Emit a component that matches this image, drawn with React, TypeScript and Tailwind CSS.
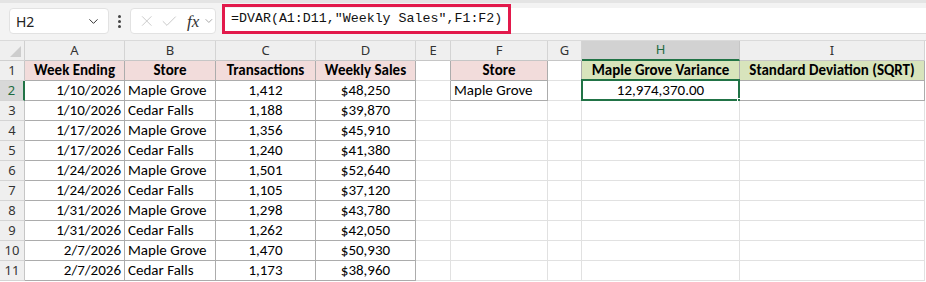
import { ChevronDown, X, Check } from "lucide-react";

const colLetters = ["A", "B", "C", "D", "E", "F", "G", "H", "I"];

const rows = [
  ["1/10/2026", "Maple Grove", "1,412", "$48,250"],
  ["1/10/2026", "Cedar Falls", "1,188", "$39,870"],
  ["1/17/2026", "Maple Grove", "1,356", "$45,910"],
  ["1/17/2026", "Cedar Falls", "1,240", "$41,380"],
  ["1/24/2026", "Maple Grove", "1,501", "$52,640"],
  ["1/24/2026", "Cedar Falls", "1,105", "$37,120"],
  ["1/31/2026", "Maple Grove", "1,298", "$43,780"],
  ["1/31/2026", "Cedar Falls", "1,262", "$42,050"],
  ["2/7/2026", "Maple Grove", "1,470", "$50,930"],
  ["2/7/2026", "Cedar Falls", "1,173", "$38,960"],
];

// cells with a drawn border: A1:D11, F1:F2, H1:I2
const bordered = (r: number, c: number) =>
  (r >= 1 && r <= 11 && c >= 0 && c <= 3) ||
  (r >= 1 && r <= 2 && c === 5) ||
  (r >= 1 && r <= 2 && (c === 7 || c === 8));

const cellText = (r: number, c: number): string => {
  if (r === 1) {
    return (
      ["Week Ending", "Store", "Transactions", "Weekly Sales", "", "Store", "", "Maple Grove Variance", "Standard Deviation (SQRT)"][c] || ""
    );
  }
  if (c <= 3) return rows[r - 2][c];
  if (r === 2 && c === 5) return "Maple Grove";
  if (r === 2 && c === 7) return "12,974,370.00";
  return "";
};

const Cell = ({ r, c }: { r: number; c: number }) => {
  const right = bordered(r, c) || bordered(r, c + 1) ? "border-r-[#acacac]" : "border-r-[#e1e1e1]";
  const bottom = bordered(r, c) || bordered(r + 1, c) ? "border-b-[#acacac]" : "border-b-[#e1e1e1]";
  let bg = "bg-white";
  if (r === 1 && (c <= 3 || c === 5)) bg = "bg-[#f2dcdb]";
  if (r === 1 && (c === 7 || c === 8)) bg = "bg-[#d8e4bc]";
  let align = "justify-center";
  if (r >= 2 && c === 0) align = "justify-end pr-[3px]";
  if (r >= 2 && (c === 1 || c === 5)) align = "justify-start pl-[3px]";
  const bold = r === 1 ? "font-bold" : "";
  const selected = r === 2 && c === 7;
  return (
    <div className={`relative flex items-center border-r border-b ${right} ${bottom} ${bg} ${align} ${bold} overflow-visible whitespace-nowrap`}>
      {cellText(r, c)}
      {selected && (
        <>
          <div className="absolute -top-[2px] -left-[1px] -right-[1px] -bottom-[1px] border-2 border-[#217346]" />
          <div className="absolute -right-[4px] -bottom-[4px] w-[6px] h-[6px] bg-[#217346] border border-white" />
        </>
      )}
    </div>
  );
};

const App = () => {
  return (
    <div className="w-[926px] h-[282px] overflow-hidden bg-white font-['Carlito','Lato',sans-serif] text-[15px] text-black">
      {/* formula toolbar */}
      <div className="h-[41px] bg-[#f3f3f3] border-t-[3px] border-[#e4e4e4] border-b border-b-[#dadada] flex items-start pt-[5px] pl-[9px]">
        <div className="w-[100px] h-[26px] bg-white rounded-[4px] border border-[#e2e2e2] flex items-center justify-between pl-[6px] pr-[7px] font-['Noto_Sans',sans-serif] text-[14px] text-[#222]">
          <span>H2</span>
          <ChevronDown size={15} strokeWidth={1.6} className="text-[#333]" />
        </div>
        <div className="w-[21px] h-[26px] flex flex-col items-center justify-center gap-[2px]">
          <span className="w-[3px] h-[3px] rounded-full bg-[#444]" />
          <span className="w-[3px] h-[3px] rounded-full bg-[#444]" />
          <span className="w-[3px] h-[3px] rounded-full bg-[#444]" />
        </div>
        <div className="w-[86px] h-[26px] bg-white rounded-[4px] border border-[#e2e2e2] flex items-center pl-[7px] gap-[4px]">
          <X size={18} strokeWidth={1.2} className="text-[#c4c4c4]" />
          <Check size={19} strokeWidth={1.2} className="text-[#c4c4c4]" />
          <span className="ml-[5px] font-['Liberation_Serif',serif] italic text-[17px] text-[#333] leading-none">fx</span>
          <ChevronDown size={12} strokeWidth={1.5} className="text-[#888]" />
        </div>
        <div className="relative ml-[6px] flex-1 h-[26px] bg-white border-b border-[#dcdcdc]">
          <div className="absolute -top-[4px] left-0 w-[289px] h-[30px] border-[3px] border-[#e2194b] flex items-center pl-[6px] font-['Liberation_Mono',monospace] text-[13.3px] text-[#111]">
            =DVAR(A1:D11,"Weekly Sales",F1:F2)
          </div>
        </div>
      </div>

      {/* sheet grid */}
      <div className="grid grid-cols-[25px_100px_91px_100px_100px_35px_97px_34px_158px_185px] auto-rows-[20px]">
        {/* corner */}
        <div className="relative bg-[#efefef] border-r border-b border-[#d0d0d0]">
          <svg className="absolute right-[3px] bottom-[3px]" width="11" height="11" viewBox="0 0 11 11">
            <polygon points="11,0 11,11 0,11" fill="#cdcdcd" />
          </svg>
        </div>
        {colLetters.map((l, i) => (
          <div
            key={l}
            className={`flex items-center justify-center font-['Noto_Sans',sans-serif] text-[13px] border-r ${
              i === 7
                ? "bg-[#d2d2d2] text-[#1e6b41] border-r-[#c6c6c6] border-b-2 border-b-[#217346]"
                : "bg-[#efefef] text-[#333] border-r-[#d4d4d4] border-b border-b-[#c6c6c6]"
            }`}
          >
            {l}
          </div>
        ))}
        {Array.from({ length: 11 }, (_, k) => k + 1).map((r) => (
          <>
            <div
              key={`h${r}`}
              className={`flex items-center justify-center font-['Noto_Sans',sans-serif] text-[13px] border-b border-b-[#d4d4d4] ${
                r === 2
                  ? "bg-[#d8d8d8] text-[#1e6b41] border-r-2 border-r-[#217346]"
                  : "bg-[#efefef] text-[#333] border-r border-r-[#c6c6c6]"
              }`}
            >
              {r}
            </div>
            {colLetters.map((_, c) => (
              <Cell key={`${r}-${c}`} r={r} c={c} />
            ))}
          </>
        ))}
      </div>
    </div>
  );
};

export default App;
